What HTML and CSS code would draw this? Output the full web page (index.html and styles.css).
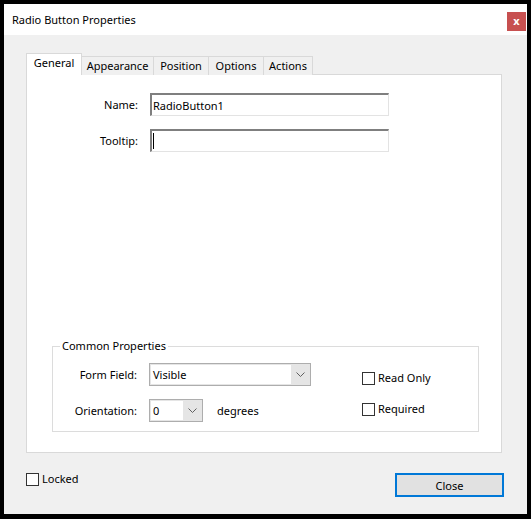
FILE: index.html
```html
<!DOCTYPE html>
<html>
<head>
<meta charset="utf-8">
<link rel="stylesheet" href="styles.css">
</head>
<body>
<div class="window">
  <div class="titlebar">
    <span class="title">Radio Button Properties</span>
    <span class="close-x">x</span>
  </div>
  <div class="content">
    <div class="tabs">
      <div class="tab active t-general">General</div>
      <div class="tab t-appearance">Appearance</div>
      <div class="tab t-position">Position</div>
      <div class="tab t-options">Options</div>
      <div class="tab t-actions">Actions</div>
    </div>
    <div class="panel">
      <div class="field-row">
        <label class="field-label">Name:</label>
        <div class="textbox">RadioButton1</div>
      </div>
      <div class="field-row">
        <label class="field-label">Tooltip:</label>
        <div class="textbox"><span class="caret"></span></div>
      </div>
      <fieldset class="group">
        <legend class="group-title">Common Properties</legend>
        <div class="group-body">
          <div class="group-left">
            <div class="grow">
              <span class="glabel">Form Field:</span>
              <div class="combo combo-wide">
                <span class="combo-text">Visible</span>
                <span class="combo-arrow"><svg width="9" height="5" viewBox="0 0 9 5"><polyline points="0.5,0.5 4.5,4.5 8.5,0.5" fill="none" stroke="#606060" stroke-width="1"/></svg></span>
              </div>
            </div>
            <div class="grow">
              <span class="glabel">Orientation:</span>
              <div class="combo combo-narrow">
                <span class="combo-text">0</span>
                <span class="combo-arrow"><svg width="9" height="5" viewBox="0 0 9 5"><polyline points="0.5,0.5 4.5,4.5 8.5,0.5" fill="none" stroke="#606060" stroke-width="1"/></svg></span>
              </div>
              <span class="unit">degrees</span>
            </div>
          </div>
          <div class="group-right">
            <div class="check"><span class="box"></span><span>Read Only</span></div>
            <div class="check"><span class="box"></span><span>Required</span></div>
          </div>
        </div>
      </fieldset>
    </div>
    <div class="footer">
      <div class="check"><span class="box"></span><span>Locked</span></div>
      <button class="btn">Close</button>
    </div>
  </div>
</div>
</body>
</html>
```

FILE: styles.css
```css
html, body {
  margin: 0;
  padding: 0;
  background: #000;
}
body {
  font-family: "Noto Sans", "Open Sans", sans-serif;
  font-size: 11px;
  color: #000;
  width: 531px;
  height: 519px;
  overflow: hidden;
}
.window {
  margin: 4px 0 0 4px;
  width: 523px;
  height: 510px;
  background: #f0f0f0;
  display: flex;
  flex-direction: column;
}
.titlebar {
  height: 31px;
  background: #fff;
  display: flex;
  align-items: flex-start;
  justify-content: space-between;
  flex: none;
}
.title {
  margin: 7px 0 0 8px;
  line-height: 17px;
}
.close-x {
  margin: 8px 1px 0 0;
  width: 19px;
  height: 19px;
  background: #c75050;
  color: #fff;
  font-weight: bold;
  font-size: 11px;
  line-height: 17px;
  text-align: center;
}
.content {
  flex: 1;
  display: flex;
  flex-direction: column;
  padding: 18px 25px 0 22px;
}
.tabs {
  display: flex;
  align-items: flex-end;
  height: 22px;
  position: relative;
  z-index: 1;
  margin-bottom: -1px;
}
.tab {
  box-sizing: border-box;
  height: 19px;
  border: 1px solid #d9d9d9;
  border-bottom: none;
  border-left: none;
  background: #f0f0f0;
  text-align: center;
  line-height: 18px;
  white-space: nowrap;
}
.tab.active {
  height: 22px;
  background: #fff;
  border-left: 1px solid #d9d9d9;
  line-height: 18px;
}
.t-general { width: 56px; }
.t-appearance { width: 72px; }
.t-position { width: 55px; }
.t-options { width: 55px; }
.t-actions { width: 49px; }

.panel {
  box-sizing: border-box;
  height: 379px;
  background: #fff;
  border: 1px solid #d9d9d9;
  display: flex;
  flex-direction: column;
  padding-top: 18px;
  gap: 13px;
}
.field-row {
  display: flex;
  align-items: center;
  gap: 12px;
}
.field-label {
  width: 111px;
  text-align: right;
}
.textbox {
  box-sizing: border-box;
  width: 239px;
  height: 23px;
  border-top: 2px solid #7f7f7f;
  border-left: 2px solid #7f7f7f;
  border-right: 1px solid #e3e3e3;
  border-bottom: 1px solid #e3e3e3;
  background: #fff;
  padding-left: 1px;
  line-height: 19px;
  display: flex;
  align-items: center;
}
.caret {
  width: 1px;
  height: 16px;
  background: #000;
}
.group {
  margin: auto 22px 20px 25px;
  padding: 0 0 9px 0;
  border: 1px solid #dcdcdc;
  min-width: 0;
}
.group-title {
  margin-left: 7px;
  padding: 0 2px;
  line-height: 14px;
}
.group-body {
  display: flex;
  padding-top: 10px;
}
.group-left {
  display: flex;
  flex-direction: column;
  gap: 13px;
}
.grow {
  display: flex;
  align-items: center;
}
.glabel {
  width: 84px;
  text-align: right;
  margin-right: 12px;
}
.combo {
  box-sizing: border-box;
  height: 23px;
  border: 1px solid #adadad;
  background: #e5e5e5;
  display: flex;
}
.combo-wide { width: 162px; }
.combo-narrow { width: 54px; }
.combo-text {
  flex: 1;
  background: #fff;
  margin: 1px 0 1px 1px;
  padding-left: 2px;
  line-height: 19px;
}
.combo-arrow {
  width: 19px;
  display: flex;
  align-items: center;
  justify-content: center;
}
.unit {
  margin-left: 14px;
}
.group-right {
  margin-left: 51px;
  display: flex;
  flex-direction: column;
  gap: 15px;
  padding-top: 7px;
}
.check {
  display: flex;
  align-items: center;
  gap: 3px;
  line-height: 16px;
}
.box {
  box-sizing: border-box;
  width: 13px;
  height: 13px;
  border: 1px solid #333;
  background: #fff;
}
.footer {
  display: flex;
  justify-content: space-between;
  align-items: flex-start;
  margin-top: 20px;
  margin-right: -2px;
}
.footer .check {
  margin-top: -2px;
}
.btn {
  box-sizing: border-box;
  width: 109px;
  height: 24px;
  border: 2px solid #0078d7;
  background: #e1e1e1;
  font-family: inherit;
  font-size: 11px;
  color: #000;
  padding: 0;
}
```
